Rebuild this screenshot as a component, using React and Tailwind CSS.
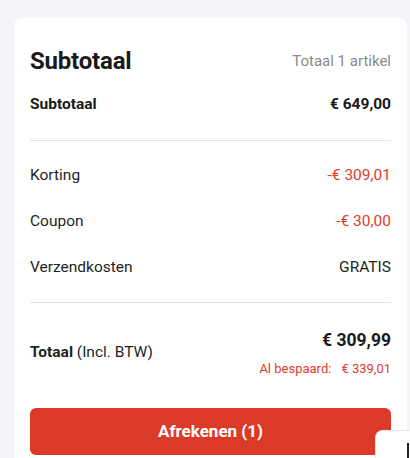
export default function App() {
  return (
    <div className="relative w-[410px] h-[458px] overflow-hidden bg-[#f4f5f9] pt-[18px] pl-[14px] pr-[3px]" style={{ fontFamily: "Roboto, 'Liberation Sans', sans-serif" }}>
      <div className="bg-white rounded-lg px-4 pt-[31px] h-[500px]">
        <div className="flex items-center justify-between h-[24px]">
          <span className="text-[24px] font-bold text-[#1a1a1a] tracking-[-0.2px]">Subtotaal</span>
          <span className="text-[15px] text-[#8a8a8e]">Totaal 1 artikel</span>
        </div>
        <div className="flex items-center justify-between mt-[22px] h-[20px] text-[15.5px] font-bold text-[#1a1a1a]">
          <span>Subtotaal</span>
          <span>€ 649,00</span>
        </div>
        <div className="mt-[25px] border-t border-[#e3e3e6]" />
        <div className="flex flex-col gap-[26px] pt-[25px] pb-[24px] text-[15.5px] text-[#1f1f1f]">
          <div className="flex items-center justify-between h-[20px]">
            <span>Korting</span>
            <span className="text-[#e03b2b]">-€ 309,01</span>
          </div>
          <div className="flex items-center justify-between h-[20px]">
            <span>Coupon</span>
            <span className="text-[#e03b2b]">-€ 30,00</span>
          </div>
          <div className="flex items-center justify-between h-[20px]">
            <span>Verzendkosten</span>
            <span>GRATIS</span>
          </div>
        </div>
        <div className="border-t border-[#e3e3e6]" />
        <div className="flex items-center justify-between pt-[25px] pb-[31px]">
          <span className="text-[15.5px] text-[#1f1f1f]"><span className="font-bold">Totaal</span> (Incl. BTW)</span>
          <div className="flex flex-col items-end">
            <span className="text-[17.5px] font-bold text-[#1a1a1a] leading-[24px]">€ 309,99</span>
            <span className="text-[13px] text-[#e03b2b] mt-[9px] leading-[16px]">Al bespaard:<span className="inline-block w-[10px]" />€ 339,01</span>
          </div>
        </div>
        <button className="w-full h-[47px] rounded-md bg-[#dc3a28] text-white text-[17px] font-bold flex items-center justify-center">
          Afrekenen (1)
        </button>
      </div>
      <div className="absolute left-[375px] top-[430px] w-[40px] h-[40px] bg-white rounded-tl-lg border-l border-t border-[#e8e8ec]" />
      <div className="absolute left-[407px] top-[443px] w-[2px] h-[20px] bg-[#222]" />
    </div>
  );
}
